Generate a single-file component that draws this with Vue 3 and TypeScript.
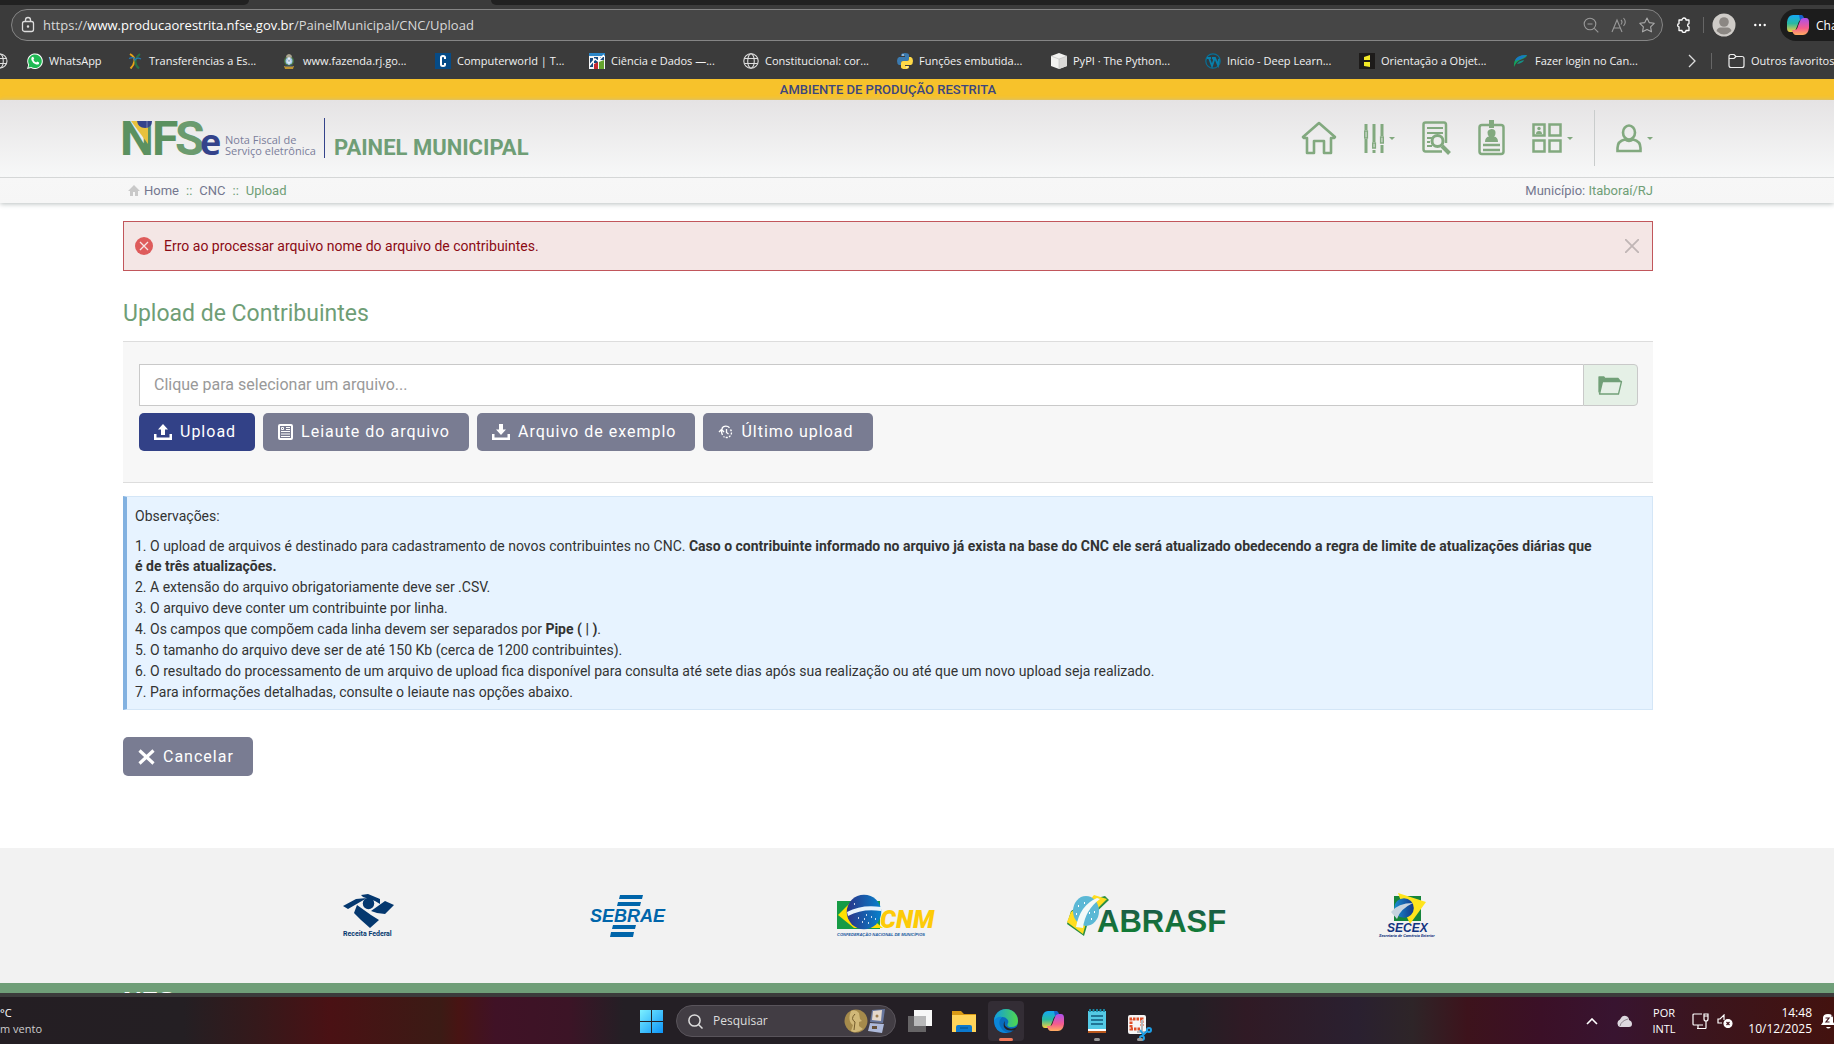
<script setup lang="ts">
import { ref } from 'vue'

interface Bookmark {
  icon: string
  label: string
}

const bookmarks: Bookmark[] = [
  { icon: 'whatsapp', label: 'WhatsApp' },
  { icon: 'transfer', label: 'Transferências a Es...' },
  { icon: 'crest', label: 'www.fazenda.rj.go...' },
  { icon: 'computer', label: 'Computerworld | T...' },
  { icon: 'data', label: 'Ciência e Dados —...' },
  { icon: 'globe', label: 'Constitucional: cor...' },
  { icon: 'python', label: 'Funções embutida...' },
  { icon: 'cube', label: 'PyPI · The Python...' },
  { icon: 'wordpress', label: 'Início - Deep Learn...' },
  { icon: 'object', label: 'Orientação a Objet...' },
  { icon: 'canvas', label: 'Fazer login no Can...' },
]

const showAlert = ref(true)
const fileName = ref('')
const search = ref('')
</script>

<template>
  <div class="screen">
    <header class="chrome">
      <div class="tabs"><span class="tab-left"></span><span class="tab-active"></span><span class="tab-right"></span></div>
      <div class="toolbar">
        <div class="address">
          <svg width="14" height="18" viewBox="0 0 14 18" fill="none" stroke="#ddd" stroke-width="1.3"><rect x="1.5" y="5.5" width="11" height="10" rx="2" /><path d="M4.5 5.500V4a2.500 2.500 0 0 1 5 0v1.500" /><circle cx="7" cy="10.500" r=".6" fill="#ddd" /></svg>
          <span class="url">https://<b>www.producaorestrita.nfse.gov.br</b>/PainelMunicipal/CNC/Upload</span>
          <span class="address-icons">
            <svg width="16" height="16" viewBox="0 0 16 16" fill="none" stroke="#999" stroke-width="1.1"><circle cx="7" cy="7" r="5.800" /><path d="M4.500 7h5M11.300 11.300l4 4" /></svg>
            <svg width="16" height="16" viewBox="0 0 16 16" fill="none" stroke="#999" stroke-width="1.1"><path d="M1 15L6 3l5 12M2.800 11h6.400M10 3q2 2 0 4.500M12.500 1q3.500 4 0 8" /></svg>
            <svg width="16" height="16" viewBox="0 0 16 16" fill="none" stroke="#aaa" stroke-width="1.1" stroke-linejoin="round"><path d="M8 1l2.200 4.600 5 .7-3.600 3.500.9 5L8 12.400l-4.500 2.400.9-5L.8 6.300l5-.7z" /></svg>
          </span>
        </div>
        <div class="tools">
          <svg width="15" height="16" viewBox="0 0 15 16" fill="none" stroke="#fff" stroke-width="1.3" stroke-linejoin="round"><path d="M3 3h3a2 2 0 0 1 4 0h3v3.500a1.800 1.800 0 0 0 0 3.500v3.500h-3a2 2 0 0 1-4 0H3V10a1.800 1.800 0 0 1 0-3.500z" /></svg>
          <i class="divider"></i>
          <svg class="avatar" width="24" height="24" viewBox="0 0 24 24"><circle cx="12" cy="12" r="11.500" fill="#cfccc8" /><circle cx="12" cy="9" r="4.800" fill="#8b8783" /><path d="M4.500 18q1-3.500 4-3.500h7q3 0 4 3.500-7.500 7-15 0z" fill="#8b8783" /></svg>
          <svg class="dots" width="12" height="4" viewBox="0 0 12 4" fill="#fff"><circle cx="1.300" cy="2" r="1.200" /><circle cx="6" cy="2" r="1.200" /><circle cx="10.700" cy="2" r="1.200" /></svg>
          <button class="chat" type="button">
            <svg width="22" height="22" viewBox="0 0 22 22"><use href="#copilot" /></svg>
            <span>Chat</span>
          </button>
        </div>
      </div>
      <nav class="bookmarks">
        <svg class="cut-globe" width="8" height="16" viewBox="8 0 8 16" fill="none" stroke="#ddd" stroke-width="1.100"><circle cx="8" cy="8" r="7" /><ellipse cx="8" cy="8" rx="3.300" ry="7" /><path d="M1 5.500h14M1 10.500h14" /></svg>
        <a v-for="b in bookmarks" :key="b.label" href="#" class="bookmark" :class="{ short: b.icon === 'whatsapp' }">
          <svg v-if="b.icon === 'whatsapp'" width="16" height="16" viewBox="0 0 16 16"><path d="M0 16l1.200-4A7.800 7.800 0 1 1 4 14.900z" fill="#fff" /><path d="M1.400 14.600l.8-2.800A6.800 6.800 0 1 1 4.400 14z" fill="#20b954" /><path d="M5 4l1.200-.2 1 2-.8 1Q7.200 8.700 9.200 9.500l.9-.9 2 1-.2 1.300q-1.200 1.200-3.200.4Q5.500 10 4.400 7 4 5 5 4z" fill="#fff" /></svg>
          <svg v-else-if="b.icon === 'transfer'" width="16" height="16" viewBox="0 0 16 16" fill="none"><path d="M3 1Q8 4 7.500 8T3.500 15.500" stroke="#e8a417" stroke-width="2" /><path d="M13 1Q9 4 8.500 8t3.500 7.500" stroke="#267348" stroke-width="2" /><path d="M2 5.500Q7 3 8 7q2-3 6-1" stroke="#2378b4" stroke-width="1.300" /></svg>
          <svg v-else-if="b.icon === 'crest'" width="16" height="16" viewBox="0 0 16 16"><circle cx="8" cy="8" r="5" fill="#477442" /><path d="M5 3q3-4 6 0l-1 3H6z" fill="#a9a48e" /><circle cx="8" cy="8" r="3.500" fill="#9fc5e8" /><path d="M8 4v8M6 9l2-4 2 4z" stroke="#fff" stroke-width=".8" fill="#315d91" /><path d="M3 13h10l-1 3H4z" fill="#bf9430" /><path d="M4 13h8" stroke="#334f7e" /></svg>
          <svg v-else-if="b.icon === 'computer'" width="16" height="16" viewBox="0 0 16 16"><rect width="16" height="16" fill="#064b86" /><path d="M10 6V4.500Q10 3 8 3T6 4.500v7Q6 13 8 13t2-1.500V10" fill="none" stroke="#fff" stroke-width="2" /></svg>
          <svg v-else-if="b.icon === 'data'" width="16" height="16" viewBox="0 0 16 16"><rect width="16" height="16" fill="#f3f5f7" /><path d="M0 0h16v3H0z" fill="#2b86c8" /><path d="M1 5h3v9H1zM5 4h4v6H5zM11 4h4v3h-4z" fill="#164a80" /><path d="M5 11l4-2v7H5z" fill="#c42831" /><path d="M10 9l5-2v9h-5z" fill="#65a32d" /><path d="M0 13l6-7 3 2 6-6" fill="none" stroke="#fff" stroke-width="1.500" /></svg>
          <svg v-else-if="b.icon === 'globe'" width="16" height="16" viewBox="0 0 16 16" fill="none" stroke="#ddd" stroke-width="1.100"><circle cx="8" cy="8" r="7.200" /><ellipse cx="8" cy="8" rx="3.300" ry="7.200" /><path d="M1.500 5.500h13M1.500 10.500h13" /></svg>
          <svg v-else-if="b.icon === 'python'" width="16" height="16" viewBox="0 0 16 16"><path d="M8 0q4 0 4 2v4q0 2-2 2H6Q4 8 4 10v2H2q-2-1-2-4t2-4h6V3H4V2q0-2 4-2z" fill="#3b7aaf" /><path d="M8 16q-4 0-4-2v-4q0-2 2-2h4q2 0 2-2V4h2q2 1 2 4t-2 4H8v1h4v1q0 2-4 2z" fill="#ffd947" /><circle cx="6" cy="2" r=".8" fill="#fff" /><circle cx="10" cy="14" r=".8" fill="#fff" /></svg>
          <svg v-else-if="b.icon === 'cube'" width="16" height="16" viewBox="0 0 16 16"><path d="M8 0l8 3v10l-8 3-8-3V3z" fill="#f2f2f0" /><path d="M8 6l8-3v10l-8 3z" fill="#dbdad8" /><path d="M0 3l8 3 8-3M8 6v10" fill="none" stroke="#bbb" stroke-width=".6" /></svg>
          <svg v-else-if="b.icon === 'wordpress'" width="16" height="16" viewBox="0 0 16 16"><circle cx="8" cy="8" r="7.200" fill="#2f3a40" stroke="#087198" stroke-width="1.200" /><path d="M2 5h4M4 5l3 8 2-6-1-2M7 5h3l3 7 1-6" fill="none" stroke="#0880ab" stroke-width="1.800" /></svg>
          <svg v-else-if="b.icon === 'object'" width="16" height="16" viewBox="0 0 16 16"><rect width="16" height="16" fill="#1d1b1a" /><path d="M5 4l6-2v5H5zM5 9h6v5l-6-1z" fill="#f3ea26" /></svg>
          <svg v-else width="16" height="16" viewBox="0 0 16 16"><path d="M1 14Q0 2 14 2q0 3-7 5-4 2-6 7z" fill="#15a35b" /><path d="M2 8q1-6 12-6Q10 6 2 8z" fill="#1778c4" /><path d="M4 11q1-3 7-4-1 3-7 4z" fill="#178f84" /></svg>
          <span>{{ b.label }}</span>
        </a>
        <div class="bookmarks-end">
          <svg width="8" height="14" viewBox="0 0 8 14" fill="none" stroke="#ddd" stroke-width="1.300"><path d="M1 1l6 6-6 6" /></svg>
          <i class="divider"></i>
          <a href="#" class="folder-link">
            <svg width="17" height="16" viewBox="0 0 17 16" fill="none" stroke="#eee" stroke-width="1.200"><path d="M1 3.500q0-2 2-2h3l2 2h6q2 0 2 2v7q0 2-2 2H3q-2 0-2-2zM1 5.500h5l2-2" /></svg>
            <span>Outros favoritos</span>
          </a>
        </div>
      </nav>
    </header>

    <div class="page">
      <div class="banner">AMBIENTE DE PRODUÇÃO RESTRITA</div>
      <div class="site-header">
        <div class="header-main">
          <div class="brand">
            <svg width="98" height="40" viewBox="0 0 98 40">
              <g class="brand-letters"><text x="-3" y="37">N</text><text x="29" y="37">F</text><text x="52" y="37" class="brand-s">S</text></g>
              <path d="M8 3h17v23z" fill="#e8c13d" /><path d="M14 3h15q0 7-7 7t-8-7z" fill="#34438b" /><path d="M24 3v7" stroke="#7482b0" />
              <text x="77" y="37" class="brand-e">e</text>
            </svg>
            <span class="brand-sub">Nota Fiscal de<br />Serviço eletrônica</span>
            <i class="brand-line"></i>
            <span class="brand-title">PAINEL MUNICIPAL</span>
          </div>
          <nav class="menu">
            <a href="#" aria-label="Início"><svg width="36" height="34" viewBox="0 0 36 34" fill="none" stroke="#82a97f" stroke-width="2.600" stroke-linejoin="round"><path d="M2 16L18 2l16 14-1 1h-3v15h-7V20H13v12H6V17H3z" /></svg></a>
            <a href="#" class="with-caret" aria-label="Configurações"><svg width="20" height="29" viewBox="0 0 20 29" fill="none" stroke="#82a97f" stroke-width="3"><path d="M2 0v6M2 15v14M10 0v18M10 26v3M18 0v12M18 21v8" /><path d="M.800 7h2.500v7H.800zM8.800 19h2.500v5H8.800zM16.700 13h2.500v6h-2.500z" stroke-width="1.600" /></svg><i class="caret"></i></a>
            <a href="#" aria-label="Consulta"><svg width="29" height="34" viewBox="0 0 29 34" fill="none" stroke="#82a97f" stroke-width="2.500"><path d="M24 14V4q0-2.500-2-2.500H3.500q-2 0-2 2V28q0 2.500 2 2.500H20" /><path d="M5 7h16M5 12h16M5 17h5M5 21h3M5 25h5" stroke-width="2" /><circle cx="15.500" cy="20" r="5.500" stroke-width="3" /><path d="M20 25l7.500 7.500" stroke-width="4" /><path d="M24 14v8" /></svg></a>
            <a href="#" aria-label="Cadastro"><svg width="27" height="36" viewBox="0 0 27 36"><path d="M4 5h19q2.500 0 2.500 2.500v24Q25.500 34 23 34H4q-2.500 0-2.500-2.500v-24Q1.500 5 4 5zM5 25h17M5 30h17" fill="none" stroke="#82a97f" stroke-width="2.500" /><path d="M11 0h5v8h-5zM7 22q0-5 4-5.500-1.500-1-1.500-4T13.500 9q4 0 4 3.500t-1.500 4q4 .5 4 5.500z" fill="#82a97f" /></svg></a>
            <a href="#" class="with-caret" aria-label="Módulos"><svg width="30" height="30" viewBox="0 0 30 30" fill="none" stroke="#82a97f" stroke-width="2.500"><path d="M1.500 1.500h11v11h-11zM17.500 1.500h11v11h-11zM1.500 17.500h11v11h-11zM17.500 17.500h11v11h-11z" /><circle cx="7" cy="5.500" r="1.700" fill="#82a97f" stroke="none" /><path d="M4 11q0-3 3-3t3 3z" fill="#82a97f" stroke="none" /></svg><i class="caret"></i></a>
            <i class="menu-line"></i>
            <a href="#" class="with-caret user" aria-label="Usuário"><svg width="26" height="29" viewBox="0 0 26 29" fill="none" stroke="#82a97f" stroke-width="2.600"><ellipse cx="13" cy="8.500" rx="6" ry="7" /><path d="M9 15.500Q1.500 17 1.500 24v3h23v-3q0-7-7.500-8.500-4 3-8 0z" /></svg><i class="caret"></i></a>
          </nav>
        </div>
        <div class="crumbs">
          <nav>
            <svg width="12" height="11" viewBox="0 0 12 11" fill="#c9c9c9"><path d="M6 0l6 6h-2v5H7V7H5v4H2V6H0z" /></svg>
            <a href="#">Home</a><i>::</i><a href="#">CNC</a><i>::</i><span class="green">Upload</span>
          </nav>
          <div>Município: <span class="green">Itaboraí/RJ</span></div>
        </div>
      </div>

      <main class="content">
        <div v-if="showAlert" class="alert" role="alert">
          <svg width="18" height="18" viewBox="0 0 18 18"><circle cx="9" cy="9" r="9" fill="#de5b5b" /><path d="M5 5l8 8M13 5l-8 8" stroke="#f7e4e4" stroke-width="1.300" /></svg>
          <span>Erro ao processar arquivo nome do arquivo de contribuintes.</span>
          <button type="button" aria-label="Fechar" @click="showAlert = false"><svg width="14" height="14" viewBox="0 0 14 14" stroke="#c0b5b5" stroke-width="1.800"><path d="M0 0l14 14M14 0L0 14" /></svg></button>
        </div>

        <h1>Upload de Contribuintes</h1>

        <form class="panel" @submit.prevent>
          <div class="file-row">
            <input v-model="fileName" type="text" readonly placeholder="Clique para selecionar um arquivo..." aria-label="Arquivo" />
            <button type="button" aria-label="Selecionar arquivo"><svg width="25" height="19" viewBox="0 0 25 19" fill="none" stroke="#72a078" stroke-width="1.300" stroke-linejoin="round"><path d="M1 16V1h5l1 1.500h13l2 2.500H5z" fill="#72a078" /><path d="M4.500 5.500h19L20.500 18H1.500z" fill="#e5f0e6" /></svg></button>
          </div>
          <div class="actions">
            <button type="submit" class="btn primary"><svg width="18" height="16" viewBox="0 0 18 16" fill="#fff"><path d="M9 0l5 5.500h-3V11H7V5.500H4zM0 10h2.500v3.500h13V10H18v6H0z" /></svg>Upload</button>
            <button type="button" class="btn"><svg width="15" height="16" viewBox="0 0 15 16" fill="none" stroke="#fff"><rect x="1" y="1" width="13" height="14" rx="1" stroke-width="2" /><path d="M3 7.500h9M3 10h9M3 12.500h9M8 3.500h4M8 5.500h4" /><path d="M3.500 3.500h2v2h-2z" /></svg>Leiaute do arquivo</button>
            <button type="button" class="btn"><svg width="18" height="16" viewBox="0 0 18 16" fill="#fff"><path d="M7 0h4v5.500h3L9 11 4 5.500h3zM0 10h2.500v3.500h13V10H18v6H0z" /></svg>Arquivo de exemplo</button>
            <button type="button" class="btn"><svg width="15" height="16" viewBox="0 0 15 16" fill="none" stroke="#fff" stroke-width="1.300"><path d="M4 4a5 5 0 0 1 7.500-.2" /><path d="M12.500 5.500a5 5 0 0 1-7 7" stroke-dasharray="2 1.200" /><path d="M4.500 4q-2 3 0 7M1 8l2.500-2.500L6 8M8.500 5v3.500l2 1.500" /></svg>Último upload</button>
          </div>
        </form>

        <section class="notes">
          <p>Observações:</p>
          <ul>
            <li>1. O upload de arquivos é destinado para cadastramento de novos contribuintes no CNC. <b>Caso o contribuinte informado no arquivo já exista na base do CNC ele será atualizado obedecendo a regra de limite de atualizações diárias que é&nbsp;de&nbsp;três&nbsp;atualizações.</b></li>
            <li>2. A extensão do arquivo obrigatoriamente deve ser .CSV.</li>
            <li>3. O arquivo deve conter um contribuinte por linha.</li>
            <li>4. Os campos que compõem cada linha devem ser separados por <b>Pipe ( | )</b>.</li>
            <li>5. O tamanho do arquivo deve ser de até 150 Kb (cerca de 1200 contribuintes).</li>
            <li>6. O resultado do processamento de um arquivo de upload fica disponível para consulta até sete dias após sua realização ou até que um novo upload seja realizado.</li>
            <li>7. Para informações detalhadas, consulte o leiaute nas opções abaixo.</li>
          </ul>
        </section>

        <button type="button" class="btn cancel"><svg width="17" height="16" viewBox="0 0 17 16" fill="none" stroke="#fff" stroke-width="3.200"><path d="M1.500 1.500l14 13M15.500 1.500l-14 13" /></svg>Cancelar</button>
      </main>

      <section class="partners">
        <div>
          <svg width="53" height="44" viewBox="0 0 53 44" fill="#05386f"><path d="M1 12L14 5l11-1L6 15zM19 1l7-1 12 5v5l-5-3-12-4zM15 11l14 10 8 5-9 8-9-8-7-7zM29 17l14-10 9 4-9 9-8-1z" /><circle cx="26.500" cy="9.500" r="5.700" /><text x="1" y="42" class="rf">Receita Federal</text></svg>
        </div>
        <div>
          <svg width="78" height="44" viewBox="0 0 78 44" fill="#0065aa"><path d="M31 1h23l-1 4H30zM29 8h23l-1 4H28zM24 31h23l-1 4H23zM22 38h23l-1 5H21z" /><text x="1" y="28" class="sebrae">SEBRAE</text></svg>
        </div>
        <div>
          <svg width="101" height="44" viewBox="0 0 101 44">
            <defs><linearGradient id="cnm-sky"><stop stop-color="#2b3388" /><stop offset="1" stop-color="#0782cc" /></linearGradient></defs>
            <path d="M0 7h43v28H0z" fill="#169b45" /><path d="M1 21L14 8l32 26H17z" fill="#fee000" /><text x="43" y="34" class="cnm">CNM</text><circle cx="27" cy="18" r="17.300" fill="url(#cnm-sky)" /><path d="M10 18q15-8 34-5v4q-18-3-33 5z" fill="#e8f2fb" /><path d="M17 10h1M21 24h1M27 25h1M31 29h1M34 23h1M38 25h1M29 21h1M25 28h1" stroke="#fff" stroke-width="1.500" /><text x="0" y="42" class="cnm-sub">CONFEDERAÇÃO NACIONAL DE MUNICÍPIOS</text>
          </svg>
        </div>
        <div>
          <svg width="163" height="44" viewBox="0 0 163 44">
            <defs><linearGradient id="abrasf-green" x2="0" y2="1"><stop stop-color="#1d554a" /><stop offset="1" stop-color="#0f8531" /></linearGradient></defs>
            <path d="M5 17L1 30l17 12 5-17L43 6l-4-4-16 4z" fill="#2b8f42" /><path d="M5 18L1 28l16 12 4-15L41 5 28 1l-5 6z" fill="#ffdd20" /><ellipse cx="20" cy="17" rx="13" ry="15" fill="#5bb8d5" /><path d="M10 33q4-22 21-29l3 1Q19 16 17 34z" fill="#f4faf8" /><path d="M12 12h1M18 9h1M23 19h1M28 18h1M25 25h1M10 20h1" stroke="#fff" stroke-width="2" /><text x="31" y="38" class="abrasf">ABRASF</text>
          </svg>
        </div>
        <div>
          <svg width="57" height="46" viewBox="0 0 57 46">
            <defs><linearGradient id="secex-sky" x2="1"><stop stop-color="#1a8ed0" /><stop offset="1" stop-color="#12378a" /></linearGradient></defs>
            <path d="M15 3h27v25H15z" fill="#16853b" /><path d="M19 0l28 9-16 22-4-9z" fill="#ffe41d" /><circle cx="25" cy="15" r="9.800" fill="url(#secex-sky)" /><path d="M12 19q7-9 22-9-13 6-16 16z" fill="#c6d3df" /><text x="8" y="39" class="secex">SECEX</text><text x="0" y="44" class="secex-sub">Secretaria de Comércio Exterior</text>
          </svg>
        </div>
      </section>
      <footer class="site-footer"><span>NFS</span></footer>
    </div>

    <footer class="taskbar">
      <div class="weather"><span>°C</span><span>m vento</span></div>
      <div class="apps">
        <button type="button" aria-label="Iniciar"><svg width="23" height="23" viewBox="0 0 23 23"><defs><linearGradient id="win" x2="1" y2="1"><stop stop-color="#7cf0ff" /><stop offset="1" stop-color="#0c94f8" /></linearGradient></defs><path d="M0 0h11v11H0zM12 0h11v11H12zM0 12h11v11H0zM12 12h11v11H12z" fill="url(#win)" /></svg></button>
        <label class="search">
          <svg width="15" height="15" viewBox="0 0 15 15" fill="none" stroke="#ddd" stroke-width="1.500"><circle cx="6.500" cy="6.500" r="5.600" /><path d="M10.500 10.500l4 4" /></svg>
          <input v-model="search" type="text" placeholder="Pesquisar" />
          <svg width="42" height="26" viewBox="0 0 42 26"><circle cx="12" cy="13" r="11.500" fill="#a58a4b" /><path d="M7 3q5-2 8 2l1 6 2 2-3 1v4l4 3q-7 5-12 2l2-6Q3 13 7 3z" fill="#d1b878" /><path d="M11 6q-5 5 0 8l-1 8" fill="none" stroke="#745c2c" /><path d="M28 2l13-1-2 14-13-1z" fill="#67769d" /><path d="M29 3l9-1-1 11-9-1z" fill="#e4d8cc" /><path d="M26 15l14 1-2 9-14-2z" fill="#aebadb" /><circle cx="33" cy="8" r="1.500" fill="#9d7d50" /><path d="M28 18h5v3h-5z" fill="#65513c" /></svg>
        </label>
        <button type="button" aria-label="Visão de tarefas"><svg width="24" height="24" viewBox="0 0 24 24"><path d="M0 7h18v16H0z" fill="#666466" /><path d="M6 1h18v16H6z" fill="#f7f7f7" /><path d="M6 7h12v10H6z" fill="#b8b8b9" /></svg></button>
        <button type="button" aria-label="Arquivos"><svg width="24" height="24" viewBox="0 0 24 24"><path d="M0 2h9l3 3h12v7H0z" fill="#d99a15" /><path d="M0 6h24v17H0z" fill="#ffd45a" /><path d="M4 23v-5q0-2 2-2h12q2 0 2 2v5z" fill="#0b79ce" /><path d="M8 19h8" stroke="#075b9d" stroke-width="1.500" /></svg></button>
        <button type="button" class="active" aria-label="Navegador"><svg width="24" height="24" viewBox="0 0 24 24"><defs><linearGradient id="edge-top"><stop stop-color="#109be0" /><stop offset="1" stop-color="#50d84b" /></linearGradient></defs><circle cx="12" cy="12" r="12" fill="#086cbd" /><path d="M0 12A12 12 0 0 1 24 12q0 6-7 6-5 0-3-4 1-2-1-4-4-5-13 2z" fill="url(#edge-top)" /><path d="M0 12Q3 7 8 8q-4 4-2 9 2 5 8 7Q1 25 0 12z" fill="#0c86d8" /><path d="M11 12q-2 5 3 7 4 2 9-1l-2 3q-8 2-11-3-1-4 1-6z" fill="#231f26" /></svg></button>
        <button type="button" aria-label="Copilot"><svg width="22" height="22" viewBox="0 0 22 22">
          <defs>
            <linearGradient id="cop-a" x2="0" y2="1"><stop stop-color="#14a7f5" /><stop offset=".5" stop-color="#28b9a1" /><stop offset="1" stop-color="#f9cf3c" /></linearGradient>
            <linearGradient id="cop-b" x2="0" y2="1"><stop stop-color="#ac50ee" /><stop offset=".6" stop-color="#f65c8c" /><stop offset="1" stop-color="#ffae60" /></linearGradient>
            <g id="copilot"><path d="M6 1h7q3 0 4 5h-3q-2 0-3 4l-2 5q-1 3-4 3H3q-3 0-3-4V8q1-7 6-7z" fill="url(#cop-a)" /><path d="M12 1h2q3 0 3 5h-4z" fill="#1763ce" /><path d="M16 21H9q-3 0-4-5h3q2 0 3-4l2-5q1-3 4-3h2q3 0 3 4v6q-1 7-6 7z" fill="url(#cop-b)" /></g>
          </defs><use href="#copilot" /></svg></button>
        <button type="button" class="open" aria-label="Bloco de notas"><svg width="18" height="24" viewBox="0 0 18 24"><path d="M0 2h18v22H0z" fill="#54c9e5" /><path d="M0 21h18v3H0z" fill="#bb581c" /><path d="M0 20h18v2H0z" fill="#fff" /><path d="M3 7h12M3 11h12M3 15h12" stroke="#11587b" stroke-width="1.600" /><path d="M2 0v3M5.500 0v3M9 0v3M12.500 0v3M16 0v3" stroke="#198ba9" stroke-width="1.800" /></svg></button>
        <button type="button" class="open wide" aria-label="Captura"><svg width="24" height="26" viewBox="0 0 24 26"><rect width="18" height="19" rx="2" fill="#f5f5f5" /><path d="M12 14H3V4h11v7" fill="none" stroke="#df4e27" stroke-width="3" stroke-dasharray="2.500 1" /><path d="M14 5v14M9 17h10" stroke="#b4b8bc" stroke-width="2" /><g fill="none" stroke="#1d9ee5" stroke-width="2"><circle cx="21" cy="15" r="2" /><circle cx="14" cy="23" r="2" /><path d="M12 15l4 5M19 16l-5 5" /></g></svg></button>
      </div>
      <div class="tray">
        <svg class="chevron" width="12" height="7" viewBox="0 0 12 7" fill="none" stroke="#fff" stroke-width="1.600"><path d="M1 6l5-5 5 5" /></svg>
        <svg class="cloud" width="16" height="12" viewBox="0 0 16 12"><path d="M4 12a4 4 0 0 1 0-7.500Q6 0 10 1q3 1 3 4 3 1 3 4t-3 3z" fill="#ddd8df" /><path d="M4 11Q5 6 12 4" stroke="#8f8790" fill="none" /></svg>
        <span class="lang">POR<br />INTL</span>
        <svg class="net" width="17" height="17" viewBox="0 0 17 17" fill="none" stroke="#fff" stroke-width="1.200"><path d="M10 1H2q-1 0-1 1v9q0 1 1 1h9M5 15.500h9M6 12v3M14 8v7.500M12 1h4v5q0 2-2 2t-2-2zM12 3h4" /></svg>
        <svg class="sound" width="16" height="14" viewBox="0 0 16 14" fill="none" stroke="#fff" stroke-width="1.200"><path d="M5 9H1V5h2l4-4v5" /><circle cx="11" cy="9.500" r="4" fill="#fff" /><path d="M9.500 8l3 3M12.500 8l-3 3" stroke="#40131b" /></svg>
        <span class="clock">14:48<br />10/12/2025</span>
        <svg class="bell" width="13" height="16" viewBox="0 0 13 16"><path d="M0 12l2-3V5q0-4 5-4t5 4v4l2 3zM5 14h5q-3 3-5 0z" fill="#fff" /><path d="M4.500 5H8L5 9h3.500M10 3h3" fill="none" stroke="#40131b" stroke-width="1.200" /></svg>
      </div>
    </footer>
  </div>
</template>

<style>
body { margin: 0; }
</style>

<style scoped>
* { box-sizing: border-box; }
.screen { height: 100vh; display: flex; flex-direction: column; overflow: hidden; font-family: Roboto, "Liberation Sans", sans-serif; background: #fff; }
svg { flex: none; display: block; }
a { color: inherit; text-decoration: none; }
i { font-style: normal; }
button { font: inherit; border: 0; margin: 0; cursor: pointer; }
.green { color: #6f9e76; }

.chrome { flex: none; background: #3b3b3b; color: #f2f2f2; font-family: "Open Sans", "Noto Sans", sans-serif; }
.tabs { display: flex; height: 5px; }
.tab-left { width: 249px; background: #212121; border-bottom-right-radius: 5px; }
.tab-active { width: 242px; }
.tab-right { flex: 1; background: #212121; border-bottom-left-radius: 5px; }
.toolbar { display: flex; padding: 4px 0 0 11px; }
.address { flex: 1; min-width: 0; height: 32px; display: flex; align-items: center; border: 1px solid #858585; border-radius: 16px; background: #464646; padding: 0 7px 0 9px; }
.url { margin-left: 8px; font-size: 13px; line-height: 20px; color: #d8d8d8; white-space: nowrap; }
.url b { font-weight: 400; color: #fff; }
.address-icons { margin-left: auto; display: flex; gap: 12px; }
.tools { width: 171px; flex: none; display: flex; align-items: center; padding-left: 13px; overflow: hidden; }
.divider { flex: none; width: 1px; height: 16px; background: #666; }
.tools .divider { margin: 0 8px 0 12px; }
.dots { margin: 0 14px 0 18px; }
.chat { flex: none; display: flex; align-items: center; gap: 7px; width: 80px; height: 32px; padding: 0 0 0 7px; border-radius: 16px 0 0 16px; background: #1c1c1c; color: #fff; font-size: 12px; }
.bookmarks { display: flex; align-items: center; height: 38px; padding-top: 2px; font-size: 11px; line-height: 18px; white-space: nowrap; overflow: hidden; }
.cut-globe { margin-right: 19px; }
.bookmark { flex: 0 0 154px; display: flex; align-items: center; gap: 6px; }
.bookmark.short { flex-basis: 100px; }
.bookmarks-end { flex: none; width: 146px; margin-left: auto; display: flex; align-items: center; overflow: hidden; }
.bookmarks-end .divider { margin: 0 16px 0 15px; }
.folder-link { display: flex; align-items: center; gap: 6px; }

.page { flex: 1; min-height: 0; overflow: hidden; display: flex; flex-direction: column; }
.page > * { flex: none; }
.banner { padding-right: 58px; background: #f7c22b; color: #3c467e; font-size: 13px; line-height: 21px; font-weight: 500; text-align: center; }
.site-header { background: linear-gradient(#fafafa, #f6f6f6); box-shadow: 0 1px 5px #b9bfbf; }
.header-main { height: 78px; display: flex; align-items: flex-start; justify-content: space-between; padding: 0 181px 0 123px; border-bottom: 1px solid #d5d7d7; background: linear-gradient(#e5e3e4, #f7f8f8); }
.brand { display: flex; align-items: flex-end; padding-top: 18px; }
.brand svg { overflow: visible; }
.brand-letters { font-family: Roboto, "Liberation Sans", sans-serif; font-size: 48px; font-weight: 700; fill: #5b9160; }
.brand-s { fill: #6b9b6f; }
.brand-e { font-family: "Open Sans", sans-serif; font-size: 36px; font-weight: 700; fill: #34438b; }
.brand-sub { margin-left: 4px; padding-bottom: 2px; width: 98px; font-family: "Open Sans", sans-serif; font-size: 11px; line-height: 11px; color: #7b7e9b; white-space: nowrap; }
.brand-line { width: 1px; height: 40px; margin-left: 1px; background: #34438b; }
.brand-title { margin-left: 9px; font-size: 22px; line-height: 20px; font-weight: 700; color: #6f9e76; white-space: nowrap; }
.menu { display: flex; align-items: center; height: 76px; }
.menu a { display: flex; align-items: center; }
.menu a + a { margin-left: 27px; }
.menu a.with-caret { gap: 5px; }
.caret { border: 3px solid transparent; border-top-color: #82a97f; border-bottom: 0; }
.menu-line { width: 1px; height: 56px; margin: 0 21px; background: #c9cccc; }
.crumbs { display: flex; justify-content: space-between; align-items: center; height: 25px; padding: 0 181px 0 128px; font-size: 13px; line-height: 18px; color: #74778f; }
.crumbs nav { display: flex; align-items: center; }
.crumbs nav svg { margin-right: 4px; }
.crumbs i { margin: 0 7px; color: #6f9e76; }

.content { padding: 18px 181px 72px 123px; color: #333; font-size: 14px; }
.alert { display: flex; align-items: center; height: 50px; padding: 0 13px 0 11px; border: 1px solid #c1565b; background: #f4e6e5; color: #8b0a14; line-height: 20px; }
.alert span { margin-left: 11px; }
.alert button { margin-left: auto; padding: 0; background: none; }
h1 { margin: 29px 0 13px; font-size: 23px; line-height: 28px; font-weight: 400; color: #6f9e76; }
.panel { padding: 22px 15px 31px 16px; border: solid #ddd; border-width: 1px 0; background: #f7f7f7; }
.file-row { display: flex; height: 42px; }
.file-row input { flex: 1; min-width: 0; padding: 0 14px; border: 1px solid #c9c9c9; border-right: 0; background: #fff; font: 16px/20px Roboto, sans-serif; color: #444; outline: 0; }
.file-row input::placeholder { color: #999; opacity: 1; }
.file-row button { width: 55px; display: flex; align-items: center; justify-content: center; padding: 0; border: 1px solid #c9c9c9; border-radius: 0 4px 4px 0; background: #e5f0e6; }
.actions { display: flex; gap: 8px; margin-top: 7px; }
.btn { display: flex; align-items: center; gap: 8px; height: 38px; padding: 0 19px 0 15px; border-radius: 5px; background: #797c92; color: #fff; font-size: 16px; line-height: 20px; letter-spacing: 1px; white-space: nowrap; }
.primary { background: #324187; }
.notes { margin-top: 13px; padding: 9px 10px 7px 8px; border: 1px solid #d4e6f7; border-left: 4px solid #82b1e0; background: #e7f3ff; line-height: 20px; }
.notes p { margin: 0 0 10px; }
.notes ul { display: flex; flex-direction: column; gap: 1px; margin: 0; padding: 0; list-style: none; }
.cancel { height: 39px; margin-top: 27px; }

.partners { display: flex; align-items: center; height: 135px; padding: 0 297px 0 239px; background: #f2f2f2; }
.partners > div { flex: 1; display: flex; justify-content: center; }
.partners svg { overflow: visible; }
.rf { font: 700 7px Roboto, sans-serif; }
.sebrae { font: italic 700 18px "Liberation Sans", sans-serif; }
.cnm { font: italic 900 25px Roboto, sans-serif; fill: #fdcb08; }
.cnm-sub { font: italic 700 4px "Liberation Sans", sans-serif; fill: #12559c; }
.abrasf { font: 700 31px "Liberation Sans", sans-serif; fill: url(#abrasf-green); }
.secex { font: italic 700 12px "Liberation Sans", sans-serif; fill: #123480; }
.secex-sub { font: italic 700 4px Roboto, sans-serif; fill: #123480; }
.page > .site-footer { flex: 1 0 40px; padding: 3px 0 0 123px; background: #6f9e78; color: #fff; font: 700 26px/30px "Liberation Sans", sans-serif; }

.taskbar { flex: none; display: flex; align-items: center; height: 51px; padding-top: 1px; border-top: 4px solid #3b3b3b; color: #fff; font: 12px/16px "Open Sans", "Noto Sans", sans-serif; background: linear-gradient(90deg, #241e23 0%, #241f23 10%, #35191b 14%, #4a1114 18%, #3b1b15 24%, #481413 25%, #401226 27%, #3c1426 31%, #241f25 34%, #241f25 65%, #301a25 68%, #2a2030 74%, #2e2528 77%, #3d131c 80%, #3b1027 84%, #381430 88%, #3b151d 93%, #43120f 100%); }
.weather { flex: 640 1 0; display: flex; flex-direction: column; font-size: 11px; white-space: nowrap; }
.weather span:last-child { color: #ccc; }
.apps { flex: none; display: flex; align-items: center; height: 42px; }
.apps button { display: flex; align-items: center; justify-content: center; padding: 0; height: 40px; background: none; position: relative; }
.search { display: flex; align-items: center; width: 220px; height: 32px; margin: 0 12px 0 13px; padding: 0 9px 0 11px; border: 1px solid #59545b; border-radius: 16px; background: #423d44; }
.search input { flex: 1; min-width: 0; padding: 0; margin-left: 10px; border: 0; outline: 0; background: none; color: #fff; font: 12px/18px "Open Sans", "Noto Sans", sans-serif; }
.search input::placeholder { color: #ddd; opacity: 1; }
.apps button + button { margin-left: 20px; }
.apps button.active { width: 36px; margin: 0 4px 0 12px; border-radius: 4px; background: #332d35; }
.apps button.active + button { margin-left: 14px; }
.apps button.open { margin-left: 24px; }
.apps button.wide { margin-left: 22px; align-items: flex-end; }
.active::after, .open::after { content: ""; position: absolute; left: 50%; bottom: 0; width: 6px; height: 3px; margin-left: -3px; border-radius: 2px; background: #999; }
.active::after { width: 14px; margin-left: -7px; background: #f0785a; }
.tray { flex: 682 1 0; min-width: 0; display: flex; align-items: center; justify-content: flex-end; overflow: hidden; }
.cloud { margin: 0 19px 0 18px; }
.lang { width: 26px; text-align: center; font-size: 11px; }
.net { margin: 0 8px 0 15px; }
.clock { width: 76px; text-align: right; margin-right: 9px; margin-left: 3px; }
</style>
